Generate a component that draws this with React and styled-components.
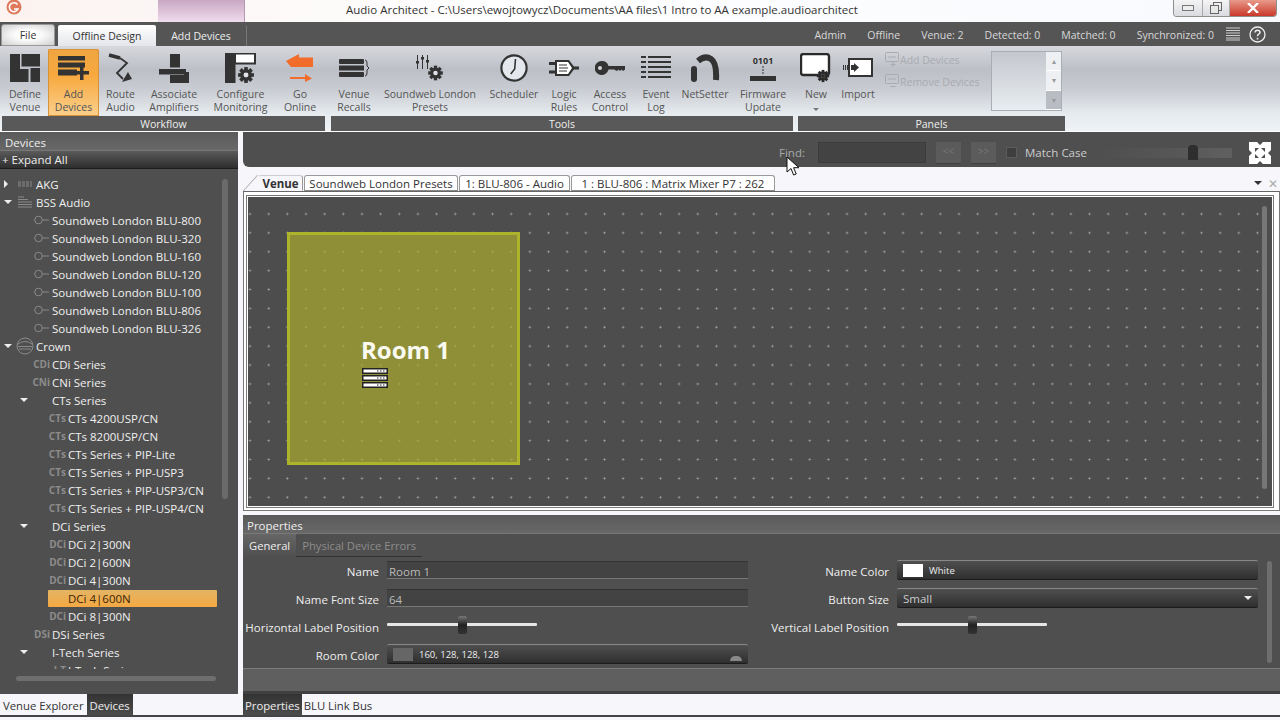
import React from "react";
import styled, { createGlobalStyle } from "styled-components";

const GlobalStyle = createGlobalStyle`
  html, body {
    margin: 0;
    padding: 0;
    background: #f6f6fb;
    font-family: "Open Sans", "Noto Sans", sans-serif;
    font-size: 11.5px;
  }
`;

const Shell = styled.div`
  position: relative;
  width: 1280px;
  height: 720px;
  overflow: hidden;
  background: #f6f6fb;
`;

/* title bar */
const TitleBar = styled.div`
  display: flex;
  align-items: flex-start;
  height: 22px;
  background: linear-gradient(90deg, #fdf3f0 0, #fbf6f5 12%, #fff 40%, #f7f9fd 100%);
`;
const Logo = styled.div`
  width: 158px;
  padding: 0 0 0 6px;
  box-sizing: border-box;
  height: 17px;
`;
const ContextBlock = styled.div`
  width: 87px;
  height: 22px;
  background: linear-gradient(180deg, #c9a7c4, #efdcec);
  border-right: 1px solid #b59ab0;
  box-sizing: border-box;
`;
const TitleText = styled.div`
  margin-left: 101px;
  line-height: 20px;
  font-size: 11.5px;
  color: #333;
  white-space: nowrap;
`;
const WindowButtons = styled.div`
  display: flex;
  margin-left: auto;
  margin-right: 3px;
  height: 17px;
  border: 1px solid #8f8f8f;
  border-top: 0;
  border-radius: 0 0 4px 4px;
  overflow: hidden;
  box-sizing: border-box;
`;
const WindowButton = styled.div`
  display: flex;
  align-items: center;
  justify-content: center;
  width: ${(p) => p.$w}px;
  background: ${(p) => (p.$close ? "linear-gradient(180deg,#e89a8a,#c9382a)" : "linear-gradient(180deg,#f4f4f4,#d9dbe0)")};
  border-right: ${(p) => (p.$close ? "0" : "1px solid #a9a9a9")};
`;

/* ribbon tabs */
const TabRow = styled.div`
  display: flex;
  align-items: stretch;
  height: 24px;
  background: #555;
  padding-left: 1px;
  font-size: 10.5px;
`;
const FileTab = styled.div`
  width: 54px;
  margin-top: 2px;
  margin-right: 3px;
  box-sizing: border-box;
  text-align: center;
  line-height: 20px;
  color: #333;
  border: 1px solid #999;
  border-radius: 3px 3px 0 0;
  background: radial-gradient(ellipse at center, #fff 30%, #cfcfcf 100%);
`;
const RibbonTab = styled.div`
  width: ${(p) => p.$w}px;
  margin-top: 3px;
  text-align: center;
  line-height: 22px;
  color: ${(p) => (p.$active ? "#333" : "#eee")};
  background: ${(p) => (p.$active ? "linear-gradient(180deg,#fff,#e4e6ea)" : "transparent")};
  border-radius: 2px 2px 0 0;
  border-right: ${(p) => (p.$ctx ? "1px solid #777" : "0")};
`;
const StatusRow = styled.div`
  display: flex;
  align-items: center;
  gap: 21px;
  margin-left: auto;
  padding: 1px 14px 0 0;
  box-sizing: border-box;
  color: #d8d8d8;
`;
const StatusIcons = styled.div`
  display: flex;
  align-items: center;
  gap: 9px;
  margin-left: -9px;
  margin-top: -1px;
`;

/* ribbon */
const Ribbon = styled.div`
  display: flex;
  height: 86px;
  padding-left: 2px;
  box-sizing: border-box;
  background: linear-gradient(180deg, #d6d8dd 0, #bcbfc6 28%, #c8cbd1 50%, #e6ebef 80%, #eff3f6 100%);
  border-bottom: 1px solid #fff;
`;
const RibbonGroup = styled.div`
  display: flex;
  flex-direction: column;
  width: ${(p) => p.$w}px;
  margin-right: ${(p) => p.$mr || 0}px;
`;
const GroupButtons = styled.div`
  display: flex;
  height: 70px;
  padding-top: 3px;
  box-sizing: border-box;
`;
const GroupLabel = styled.div`
  height: 15px;
  line-height: 17px;
  text-align: center;
  color: #eee;
  font-size: 10.5px;
  background: #595959;
`;
const RibbonButton = styled.div`
  display: flex;
  flex-direction: column;
  align-items: center;
  width: ${(p) => p.$w}px;
  height: 67px;
  box-sizing: border-box;
  border-radius: 2px 2px 0 0;
  background: ${(p) => (p.$active ? "linear-gradient(180deg,#f0a540 0,#f7a93f 40%,#fbd08d 100%)" : "transparent")};
  box-shadow: ${(p) => (p.$active ? "inset 0 0 0 1px #d89236" : "none")};
`;
const IconSlot = styled.div`
  display: flex;
  align-items: center;
  justify-content: center;
  height: 38px;
  padding-bottom: 1px;
  flex: none;
`;
const ButtonLabel = styled.div`
  font-size: 10.5px;
  line-height: 13px;
  text-align: center;
  color: #555;
  white-space: pre-line;
`;
const SmallCommands = styled.div`
  display: flex;
  flex-direction: column;
  gap: 7px;
  width: 109px;
  padding: 3px 0 0 3px;
  box-sizing: border-box;
`;
const SmallCommand = styled.div`
  display: flex;
  align-items: center;
  height: 15px;
  font-size: 10.5px;
  color: #a9abb0;
  white-space: nowrap;
`;
const Gallery = styled.div`
  display: flex;
  justify-content: flex-end;
  width: 71px;
  height: 60px;
  border: 1px solid #a9adb4;
  box-sizing: border-box;
  margin-top: 2px;
  background: linear-gradient(180deg, #c4c7cd, #e8edf1);
`;
const GalleryScroll = styled.div`
  display: flex;
  flex-direction: column;
  width: 15px;
  background: #eef0f3;
`;
const GalleryStep = styled.div`
  flex: 1;
  display: flex;
  align-items: center;
  justify-content: center;
  font-size: 8px;
  line-height: 1;
  color: #999;
  border-bottom: 1px solid #fff;
  background: ${(p) => (p.$dark ? "#b9bcc2" : "transparent")};
`;

/* main area */
const Main = styled.div`
  display: flex;
  gap: 5px;
  height: 583px;
`;
const Column = styled.div`
  display: flex;
  flex-direction: column;
  width: ${(p) => p.$w}px;
  flex: none;
`;
const LeftPanel = styled.div`
  display: flex;
  flex-direction: column;
  height: 562px;
  background: #4f4f4f;
`;
const PanelTitle = styled.div`
  height: 19px;
  line-height: 21px;
  padding-left: ${(p) => p.$pl}px;
  color: #eee;
  font-size: 11.5px;
  background: linear-gradient(180deg, #5a5a5a, #686868);
  border-bottom: 1px solid #777;
  box-sizing: border-box;
`;
const ExpandAll = styled.div`
  height: 18px;
  line-height: 18px;
  padding-left: 2px;
  color: #eee;
  background: linear-gradient(180deg, #5a5a5a, #2e2e2e);
  border-bottom: 1px solid #1e1e1e;
  box-sizing: border-box;
`;
const TreeArea = styled.div`
  display: flex;
  height: 500px;
  overflow: hidden;
`;
const TreeList = styled.div`
  width: 217px;
  padding-top: 6px;
  flex: none;
`;
const TreeRow = styled.div`
  display: flex;
  align-items: center;
  height: 18px;
  padding-left: ${(p) => 4 + p.$level * 16}px;
  box-sizing: border-box;
`;
const Expander = styled.div`
  width: 12px;
  flex: none;
  display: flex;
  align-items: center;
`;
const Arrow = styled.div`
  width: 0;
  height: 0;
  ${(p) =>
    p.$open
      ? "border-left: 4px solid transparent; border-right: 4px solid transparent; border-top: 4px solid #eee;"
      : "border-top: 4px solid transparent; border-bottom: 4px solid transparent; border-left: 4px solid #eee;"}
`;
const TreeContent = styled.div`
  flex: 1;
  display: flex;
  align-items: center;
  gap: 2px;
  height: 17px;
  color: ${(p) => (p.$selected ? "#3c2405" : "#f0f0f0")};
  font-size: 11.5px;
  white-space: nowrap;
  border-radius: 1px;
  background: ${(p) => (p.$selected ? "linear-gradient(180deg,#e3b465,#f4a942)" : "transparent")};
`;
const TreeIcon = styled.div`
  width: 18px;
  flex: none;
  display: flex;
  align-items: center;
  justify-content: flex-end;
  color: #8c8c8c;
  font-size: 10px;
  font-weight: 700;
`;
const TreeScroll = styled.div`
  width: 6px;
  height: 320px;
  margin: 10px 0 0 5px;
  border-radius: 3px;
  background: #6a6a6a;
`;
const HScrollTrack = styled.div`
  padding: 7px 22px 13px 16px;
`;
const HScrollThumb = styled.div`
  height: 5px;
  border-radius: 3px;
  background: #6e6e6e;
`;
const BottomTabs = styled.div`
  display: flex;
  height: 21px;
`;
const BottomTab = styled.div`
  padding: 0 ${(p) => p.$px}px;
  line-height: 23px;
  font-size: 11.3px;
  color: ${(p) => (p.$active ? "#eee" : "#333")};
  background: ${(p) => (p.$active ? "linear-gradient(180deg,#333,#4c4c4c)" : "transparent")};
`;

/* find toolbar */
const FindBar = styled.div`
  display: flex;
  align-items: center;
  height: 35px;
  padding: 6px 0 0 536px;
  box-sizing: border-box;
  background: #4f4f4f;
  border-radius: 0 0 0 6px;
  color: #999;
`;
const FindLabel = styled.div`
  width: 39px;
  color: #aaa;
`;
const FindInput = styled.div`
  width: 108px;
  height: 21px;
  background: #434343;
  border: 1px solid #3c3c3c;
  box-sizing: border-box;
  margin-right: 10px;
`;
const FindStep = styled.div`
  width: 25px;
  height: 22px;
  margin-right: 10px;
  text-align: center;
  line-height: 18px;
  font-size: 10px;
  color: #777;
  background: #5b5b5b;
  border-bottom: 1px solid #3f3f3f;
  box-sizing: border-box;
`;
const CheckBox = styled.div`
  width: 11px;
  height: 11px;
  background: #3e3e3e;
  border: 1px solid #5c5c5c;
  margin-right: 8px;
  box-sizing: border-box;
`;
const MatchCase = styled.div`
  width: 75px;
  color: #ccc;
`;
const ZoomSlider = styled.div`
  position: relative;
  width: 132px;
  height: 10px;
  margin-right: 17px;
  background: linear-gradient(94deg, transparent 0, #575757 60%, #606060 100%);
`;
const ZoomThumb = styled.div`
  position: absolute;
  left: 88px;
  top: -3px;
  width: 10px;
  height: 15px;
  border-radius: 4px 4px 0 0;
  background: #2e2e2e;
`;

/* document tabs */
const DocTabs = styled.div`
  display: flex;
  align-items: flex-end;
  height: 24px;
  padding-left: 15px;
  box-sizing: border-box;
`;
const DocTab = styled.div`
  position: relative;
  width: ${(p) => p.$w}px;
  height: 16px;
  line-height: 15px;
  margin-right: 1px;
  text-align: center;
  font-size: 11.5px;
  font-weight: ${(p) => (p.$active ? 700 : 400)};
  color: #333;
  background: ${(p) => (p.$active ? "transparent" : "#fff")};
  border: 1px solid #999;
  border-color: ${(p) => (p.$active ? "#ccc #999 transparent transparent" : "#999 #999 #888 #999")};
  border-radius: 3px 3px 0 0;
  box-sizing: border-box;
  white-space: nowrap;
  &::before {
    content: "";
    display: ${(p) => (p.$active ? "block" : "none")};
    position: absolute;
    left: -9px;
    top: -1px;
    width: 14px;
    height: 16px;
    border-left: 1px solid #aaa;
    transform: skewX(-42deg);
  }
`;
const DocTools = styled.div`
  display: flex;
  align-items: center;
  gap: 6px;
  height: 16px;
  margin-left: auto;
  padding-right: 2px;
  color: #aaa;
`;
const DocMenuArrow = styled.div`
  width: 0;
  height: 0;
  border-left: 4px solid transparent;
  border-right: 4px solid transparent;
  border-top: 4px solid #333;
`;
const CanvasFrame = styled.div`
  height: 320px;
  padding: 3px 5px 2px 2px;
  margin-bottom: 4px;
  box-sizing: border-box;
  background: #fff;
  border: 1px solid #777;
  border-top: 1px solid #666;
`;
const CanvasInset = styled.div`
  height: 100%;
  padding: 1px;
  box-sizing: border-box;
  border: 1px solid #777;
`;
const Canvas = styled.div`
  position: relative;
  height: 100%;
  background-color: #4d4d4d;
  background-image: radial-gradient(circle, #a8a8a8 0.8px, transparent 1.2px);
  background-size: 18.67px 18.9px;
  background-position: -7.3px -11.4px;
  overflow: hidden;
`;
const Room = styled.div`
  position: absolute;
  left: 39px;
  top: 35px;
  width: 233px;
  height: 233px;
  box-sizing: border-box;
  background: rgba(171, 171, 47, 0.7);
  border: 3px solid #aeb32c;
`;
const RoomName = styled.div`
  position: absolute;
  left: 113px;
  top: 137px;
  color: #fafaf0;
  font-size: 24px;
  font-weight: 700;
  line-height: 32px;
  white-space: nowrap;
`;
const RoomRack = styled.div`
  position: absolute;
  left: 114px;
  top: 171px;
  line-height: 0;
`;
const CanvasScroll = styled.div`
  position: absolute;
  right: 5px;
  top: 9px;
  width: 5px;
  height: 283px;
  border-radius: 3px;
  background: #777;
`;

/* properties */
const Properties = styled.div`
  display: flex;
  flex-direction: column;
  height: 179px;
  background: #4f4f4f;
`;
const PropTabs = styled.div`
  display: flex;
  height: 23px;
`;
const PropTab = styled.div`
  padding: 0 ${(p) => p.$px}px;
  line-height: 23px;
  font-size: 11.2px;
  color: ${(p) => (p.$active ? "#eee" : "#8d8d8d")};
  background: ${(p) => (p.$active ? "linear-gradient(180deg,#666,#4f4f4f)" : "transparent")};
  border-bottom: ${(p) => (p.$active ? "0" : "1px solid #333")};
`;
const PropBody = styled.div`
  position: relative;
  flex: 1;
  padding-top: 3px;
  box-sizing: border-box;
`;
const PropGrid = styled.div`
  display: grid;
  grid-template-columns: 136px 361px 133px 361px;
  grid-auto-rows: 20px;
  column-gap: 8px;
  row-gap: 8px;
`;
const PropLabel = styled.div`
  text-align: right;
  line-height: 23px;
  color: #eee;
  white-space: nowrap;
`;
const TextField = styled.div`
  height: 18px;
  margin-top: 1px;
  padding-left: 2px;
  line-height: 19px;
  color: #bbb;
  background: #434343;
  border-top: 1px solid #333;
  border-bottom: 1px solid #777;
  box-sizing: border-box;
`;
const PickerField = styled.div`
  display: flex;
  align-items: center;
  height: 20px;
  padding: 0 6px;
  gap: 6px;
  box-sizing: border-box;
  color: #eee;
  font-size: 9.5px;
  border-top: 1px solid #888;
  border-bottom: 1px solid #1c1c1c;
  border-radius: 2px;
  background: linear-gradient(180deg, #4f4f4f, #2f2f2f);
`;
const Swatch = styled.div`
  width: 20px;
  height: 13px;
  background: ${(p) => p.$color};
`;
const SelectValue = styled.div`
  flex: 1;
  font-size: 11.5px;
  color: #ccc;
`;
const SelectArrow = styled.div`
  width: 0;
  height: 0;
  border-left: 4px solid transparent;
  border-right: 4px solid transparent;
  border-top: 4px solid #eee;
`;
const PickerCorner = styled.div`
  width: 12px;
  height: 5px;
  margin-left: auto;
  margin-top: 9px;
  border-radius: 6px 6px 0 0;
  background: #888;
`;
const Slider = styled.div`
  position: relative;
  width: 150px;
  height: 20px;
`;
const SliderRail = styled.div`
  position: absolute;
  left: 0;
  right: 0;
  top: 7px;
  height: 3px;
  background: #e6e6e6;
  border-radius: 1px;
`;
const SliderThumb = styled.div`
  position: absolute;
  left: 71px;
  top: 0;
  width: 9px;
  height: 18px;
  border-radius: 2px;
  background: linear-gradient(180deg, #777, #222 50%, #333);
`;
const PropScroll = styled.div`
  position: absolute;
  right: 8px;
  top: 4px;
  width: 5px;
  height: 102px;
  border-radius: 3px;
  background: #6e6e6e;
`;
const PropFooter = styled.div`
  height: 26px;
  box-sizing: border-box;
  background: #5f5f5f;
  border-top: 1px solid #7c7c7c;
  border-bottom: 3px solid #404040;
`;
const BottomEdge = styled.div`
  height: 2px;
  background: #444;
`;
const Pointer = styled.div`
  position: absolute;
  left: 786px;
  top: 156px;
  line-height: 0;
`;

const ink = "#333";

const GearPath = ({ cx, cy, r, fill = ink }) => {
  const teeth = [0, 45, 90, 135].map((a) => (
    <rect key={a} x={cx - r * 0.28} y={cy - r * 1.22} width={r * 0.56} height={r * 2.44} fill={fill} transform={`rotate(${a} ${cx} ${cy})`} />
  ));
  return (
    <g>
      {teeth}
      <circle cx={cx} cy={cy} r={r * 0.9} fill={fill} />
      <circle cx={cx} cy={cy} r={r * 0.38} fill="#dfe3e7" />
    </g>
  );
};

const DefineVenueIcon = () => (
  <svg width="30" height="28" viewBox="0 0 30 28" fill={ink}>
    <path d="M0 0h10v15h8.5v13H0z" />
    <rect x="11.5" width="18.5" height="12.5" />
    <rect x="20.5" y="14" width="9.5" height="14" />
  </svg>
);
const AddDevicesIcon = () => (
  <svg width="31" height="24" viewBox="0 0 31 24" fill={ink}>
    <rect width="27" height="4.5" />
    <rect y="6.5" width="27" height="5" />
    <rect y="13.5" width="19" height="6" />
    <path d="M22 9h3.5v6H31v3.5h-5.5V24H22v-5.5h-3V15h3z" />
  </svg>
);
const RouteAudioIcon = () => (
  <svg width="26" height="30" viewBox="0 0 26 30" fill="none" stroke={ink}>
    <path d="M1 2l11 3" strokeWidth="3.5" />
    <path d="M12 5l7 5-10 10 6 6" strokeWidth="1.8" />
    <path d="M14 29l10-3-4-7z" fill={ink} stroke="none" />
  </svg>
);
const AssociateIcon = () => (
  <svg width="31" height="29" viewBox="0 0 31 29" fill={ink}>
    <rect x="11" width="10" height="13.5" />
    <path d="M0 15h27v3h3v11H11v-8h14v-2H0z" />
    <rect x="0" y="15" width="25" height="5.5" />
  </svg>
);
const ConfigureIcon = () => (
  <svg width="31" height="30" viewBox="0 0 31 30">
    <rect y="0" width="10.5" height="30" fill={ink} />
    <rect x="10" y="0.5" width="20" height="10" fill="#fff" stroke={ink} strokeWidth="2" />
    <GearPath cx="21" cy="22" r="6.5" />
  </svg>
);
const GoOnlineIcon = () => (
  <svg width="28" height="28" viewBox="0 0 28 28" fill="#f26c2b">
    <path d="M0 7L13 0v3.5h14V13H5z" />
    <path d="M4 23h15v-3l7 4.5-7 3.500v-3H4z" />
  </svg>
);
const RecallsIcon = () => (
  <svg width="30" height="18" viewBox="0 0 30 18" fill={ink}>
    <rect width="25" height="5" rx="1" />
    <rect y="6.5" width="25" height="5" />
    <rect y="13" width="25" height="5" rx="1" />
    <path d="M26 1q2 0 2 3v3l2 2-2 2v3q0 3-2 3" fill="none" stroke={ink} strokeWidth="1" />
  </svg>
);
const PresetsIcon = () => (
  <svg width="28" height="28" viewBox="0 0 28 28">
    <g stroke={ink} strokeWidth="1">
      <path d="M1.5 1v14M6.5 1v14M11.5 1v14" />
    </g>
    <g fill={ink}>
      <rect x="0" y="7" width="3" height="2.5" />
      <rect x="5" y="3" width="3" height="2.5" />
      <rect x="10" y="6" width="3" height="2.5" />
    </g>
    <GearPath cx="19.5" cy="19" r="6" />
  </svg>
);
const ClockIcon = () => (
  <svg width="28" height="28" viewBox="0 0 28 28" fill="none" stroke={ink}>
    <circle cx="14" cy="14" r="12.6" strokeWidth="2.2" fill="#e4e7eb" />
    <path d="M15.5 5l-.8 10-4 5" strokeWidth="1.6" />
  </svg>
);
const LogicIcon = () => (
  <svg width="30" height="18" viewBox="0 0 30 18">
    <path d="M0 4.5h6M0 13h6M24 9h6" stroke={ink} strokeWidth="3" />
    <path d="M6 1h14l6 8-6 8H6z" fill={ink} />
    <path d="M8 3h11l4 6-4 6H8z" fill="#fff" />
    <path d="M10 6h8M10 9h9M10 12h8" stroke={ink} strokeWidth="1" />
  </svg>
);
const KeyIcon = () => (
  <svg width="30" height="14" viewBox="0 0 30 14" fill={ink}>
    <path d="M7 0a7 7 0 0 1 6.5 5H30v3.5l-2 1.5-1.5-1.5-1.5 1.5-1.5-1.5-1.5 1.5L19 8.5H13.500A7 7 0 1 1 7 0z" />
    <circle cx="5" cy="7" r="2" fill="#d3d6da" />
  </svg>
);
const EventLogIcon = () => (
  <svg width="30" height="24" viewBox="0 0 30 24" fill={ink}>
    {[0, 5, 10, 15, 20].map((y) => (
      <g key={y}>
        <rect y={y} width="5" height="2" />
        <rect x="7" y={y} width="23" height="2" />
      </g>
    ))}
  </svg>
);
const NetSetterIcon = () => (
  <svg width="30" height="28" viewBox="0 0 30 28" fill="none" stroke={ink} strokeLinecap="round">
    <path d="M8 7Q15 1 21 5q6 4 5 21" strokeWidth="6" strokeLinecap="butt" />
    <path d="M4 15v10" strokeWidth="6" />
  </svg>
);
const FirmwareIcon = () => (
  <svg width="28" height="27" viewBox="0 0 28 27">
    <text x="14" y="9" textAnchor="middle" fontSize="9" fontWeight="700" fontFamily="Open Sans, sans-serif" fill={ink}>0101</text>
    <path d="M14 11v8" stroke={ink} strokeWidth="1" strokeDasharray="2 1" />
    <rect x="1" y="21" width="26" height="5" fill={ink} />
  </svg>
);
const NewPanelIcon = () => (
  <svg width="32" height="30" viewBox="0 0 32 30">
    <rect x="1" y="1" width="28" height="21" rx="2.5" fill="#fff" stroke="#2a2a2a" strokeWidth="2.4" />
    <GearPath cx="23" cy="23" r="5" fill="#2a2a2a" />
    <circle cx="23" cy="23" r="2" fill="#2a2a2a" />
  </svg>
);
const ImportIcon = () => (
  <svg width="30" height="20" viewBox="0 0 30 20" fill={ink}>
    <rect x="6" y="1" width="23" height="17" fill="#fff" stroke={ink} strokeWidth="2" />
    <path d="M0 7h1v5H0zM2 7h1v5H2zM4 7h1v5H4zM6 7h1v5H6zM8 7h3V5l5 4.5-5 4.500v-2H8z" />
  </svg>
);
const DisabledPanelIcon = ({ plus }) => (
  <svg width="15" height="15" viewBox="0 0 15 15" fill="none" stroke="#a9abb0">
    <rect x="0.5" y="0.5" width="13" height="9" rx="1" />
    <path d="M3 5h8" />
    <path d={plus ? "M8 10v5M5.500 12.500h5" : "M5.500 12.500h5"} />
  </svg>
);
const ListIcon = () => (
  <svg width="14" height="14" viewBox="0 0 14 14" stroke="#ddd">
    {[1, 3.5, 6, 8.5, 11, 13].map((y) => (
      <path key={y} d={`M0 ${y}h14`} strokeWidth="0.9" />
    ))}
  </svg>
);
const HelpIcon = () => (
  <svg width="17" height="17" viewBox="0 0 17 17" fill="none" stroke="#eee">
    <circle cx="8.5" cy="8.5" r="7.5" strokeWidth="1.3" />
    <path d="M6 6.500q.3-2.300 2.500-2.300t2.500 2q0 1.300-1.300 2t-1.200 2" strokeWidth="1.5" />
    <circle cx="8.5" cy="12.7" r="0.9" fill="#eee" stroke="none" />
  </svg>
);
const LogoIcon = () => (
  <svg width="16" height="16" viewBox="0 0 16 16">
    <circle cx="8" cy="7" r="7.5" fill="#df7a5c" />
    <path d="M11.500 4.500A4.500 4.500 0 1 0 12 9H8" fill="none" stroke="#fff" strokeWidth="1.6" />
  </svg>
);
const FitIcon = () => (
  <svg width="22" height="22" viewBox="0 0 22 22">
    <rect width="22" height="22" fill="#fff" />
    <path d="M8 0l3 3 3-3zM8 22l3-3 3 3zM0 8l3 3-3 3zM22 8l-3 3 3 3z" fill="#4f4f4f" />
    <path d="M6 6l4 0-4 4zM16 6l-4 0 4 4zM6 16l4 0-4-4zM16 16l-4 0 4-4z" fill="#4f4f4f" />
  </svg>
);
const RackIcon = () => (
  <svg width="26" height="20" viewBox="0 0 26 20">
    {[0, 7, 14].map((y) => (
      <g key={y}>
        <rect x="0.5" y={y + 0.5} width="25" height="5" fill="#222" stroke="#222" />
        <rect x="1.5" y={y + 1.5} width="23" height="3" fill="#fff" />
        <rect x="3" y={y + 2} width="8" height="2" fill="#fff" />
        <path d={`M15 ${y + 3}h9`} stroke="#222" strokeDasharray="1.5 1.5" />
      </g>
    ))}
  </svg>
);
const PointerIcon = () => (
  <svg width="14" height="21" viewBox="0 0 14 21">
    <path d="M1 1v15l4-3.500 2.600 6.500 2.600-1-2.600-6.300H13z" fill="#fff" stroke="#111" strokeWidth="1" />
  </svg>
);
const SoundwebIcon = () => (
  <svg width="16" height="10" viewBox="0 0 16 10" fill="none" stroke="#8a8a8a">
    <circle cx="4.5" cy="5" r="3.8" />
    <path d="M8.500 5H15" />
  </svg>
);
const LinesIcon = ({ small }) => (
  <svg width="18" height="12" viewBox="0 0 18 12" stroke="#8a8a8a">
    {small ? (
      <path d="M2 4h14M2 6h14M2 8h14" strokeDasharray="3 1" />
    ) : (
      <path d="M2 1h6M2 3.500h10M2 6h14M2 8.500h14M2 11h14" />
    )}
  </svg>
);
const CrownIcon = () => (
  <svg width="18" height="18" viewBox="0 0 18 18" fill="none" stroke="#8a8a8a">
    <circle cx="9" cy="9" r="8" />
    <path d="M2 7q7-5 14 0M2 9.500h14M3 12h12" />
  </svg>
);

const workflow = [
  { w: 46, label: "Define\nVenue", icon: <DefineVenueIcon /> },
  { w: 51, label: "Add\nDevices", icon: <AddDevicesIcon />, active: true },
  { w: 43, label: "Route\nAudio", icon: <RouteAudioIcon /> },
  { w: 64, label: "Associate\nAmplifiers", icon: <AssociateIcon /> },
  { w: 69, label: "Configure\nMonitoring", icon: <ConfigureIcon /> },
  { w: 50, label: "Go\nOnline", icon: <GoOnlineIcon /> },
];
const tools = [
  { w: 46, label: "Venue\nRecalls", icon: <RecallsIcon /> },
  { w: 106, label: "Soundweb London\nPresets", icon: <PresetsIcon /> },
  { w: 62, label: "Scheduler", icon: <ClockIcon /> },
  { w: 38, label: "Logic\nRules", icon: <LogicIcon /> },
  { w: 54, label: "Access\nControl", icon: <KeyIcon /> },
  { w: 38, label: "Event\nLog", icon: <EventLogIcon /> },
  { w: 60, label: "NetSetter", icon: <NetSetterIcon /> },
  { w: 56, label: "Firmware\nUpdate", icon: <FirmwareIcon /> },
];

const blu = ["800", "320", "160", "120", "100", "806", "326"];
const tree = [
  { level: 0, arrow: "closed", icon: <LinesIcon small />, text: "AKG" },
  { level: 0, arrow: "open", icon: <LinesIcon />, text: "BSS Audio" },
  ...blu.map((n) => ({ level: 1, icon: <SoundwebIcon />, text: `Soundweb London BLU-${n}` })),
  { level: 0, arrow: "open", icon: <CrownIcon />, text: "Crown" },
  { level: 1, badge: "CDi", text: "CDi Series" },
  { level: 1, badge: "CNi", text: "CNi Series" },
  { level: 1, arrow: "open", text: "CTs Series" },
  { level: 2, badge: "CTs", text: "CTs 4200USP/CN" },
  { level: 2, badge: "CTs", text: "CTs 8200USP/CN" },
  { level: 2, badge: "CTs", text: "CTs Series + PIP-Lite" },
  { level: 2, badge: "CTs", text: "CTs Series + PIP-USP3" },
  { level: 2, badge: "CTs", text: "CTs Series + PIP-USP3/CN" },
  { level: 2, badge: "CTs", text: "CTs Series + PIP-USP4/CN" },
  { level: 1, arrow: "open", text: "DCi Series" },
  { level: 2, badge: "DCi", text: "DCi 2|300N" },
  { level: 2, badge: "DCi", text: "DCi 2|600N" },
  { level: 2, badge: "DCi", text: "DCi 4|300N" },
  { level: 2, badge: "DCi", text: "DCi 4|600N", selected: true },
  { level: 2, badge: "DCi", text: "DCi 8|300N" },
  { level: 1, badge: "DSi", text: "DSi Series" },
  { level: 1, arrow: "open", text: "I-Tech Series" },
  { level: 2, badge: "I-T", text: "I-Tech Series" },
];

const RibbonButtons = ({ items }) =>
  items.map((b) => (
    <RibbonButton key={b.label} $w={b.w} $active={b.active}>
      <IconSlot>{b.icon}</IconSlot>
      <ButtonLabel>{b.label}</ButtonLabel>
    </RibbonButton>
  ));

export default function App() {
  return (
    <Shell>
      <GlobalStyle />
      <TitleBar>
        <Logo>
          <LogoIcon />
        </Logo>
        <ContextBlock />
        <TitleText>Audio Architect - C:\Users\ewojtowycz\Documents\AA files\1 Intro to AA example.audioarchitect</TitleText>
        <WindowButtons>
          <WindowButton $w={28}>
            <svg width="12" height="6"><rect x="0.5" y="0.5" width="11" height="5" fill="#eee" stroke="#777" /></svg>
          </WindowButton>
          <WindowButton $w={26}>
            <svg width="12" height="12" fill="none" stroke="#666"><rect x="3.5" y="0.5" width="8" height="8" /><rect x="0.5" y="3.5" width="8" height="8" fill="#e8e8e8" /></svg>
          </WindowButton>
          <WindowButton $w={46} $close>
            <svg width="12" height="10" stroke="#fff" strokeWidth="2.4"><path d="M1 0l10 10M11 0L1 10" /></svg>
          </WindowButton>
        </WindowButtons>
      </TitleBar>

      <TabRow>
        <FileTab>File</FileTab>
        <RibbonTab $w={98} $active>Offline Design</RibbonTab>
        <RibbonTab $w={90} $ctx>Add Devices</RibbonTab>
        <StatusRow>
          <span>Admin</span>
          <span>Offline</span>
          <span>Venue: 2</span>
          <span>Detected: 0</span>
          <span>Matched: 0</span>
          <span>Synchronized: 0</span>
          <StatusIcons>
            <ListIcon />
            <HelpIcon />
          </StatusIcons>
        </StatusRow>
      </TabRow>

      <Ribbon>
        <RibbonGroup $w={323} $mr={6}>
          <GroupButtons>
            <RibbonButtons items={workflow} />
          </GroupButtons>
          <GroupLabel>Workflow</GroupLabel>
        </RibbonGroup>
        <RibbonGroup $w={462} $mr={5}>
          <GroupButtons>
            <RibbonButtons items={tools} />
          </GroupButtons>
          <GroupLabel>Tools</GroupLabel>
        </RibbonGroup>
        <RibbonGroup $w={267}>
          <GroupButtons>
            <RibbonButton $w={36}>
              <IconSlot><NewPanelIcon /></IconSlot>
              <ButtonLabel>New</ButtonLabel>
              <svg width="6" height="12"><path d="M0 7h6l-3 3z" fill="#777" /></svg>
            </RibbonButton>
            <RibbonButton $w={48}>
              <IconSlot><ImportIcon /></IconSlot>
              <ButtonLabel>Import</ButtonLabel>
            </RibbonButton>
            <SmallCommands>
              <SmallCommand><DisabledPanelIcon plus />Add Devices</SmallCommand>
              <SmallCommand><DisabledPanelIcon />Remove Devices</SmallCommand>
            </SmallCommands>
            <Gallery>
              <GalleryScroll>
                <GalleryStep>▴</GalleryStep>
                <GalleryStep>▾</GalleryStep>
                <GalleryStep $dark>▾</GalleryStep>
              </GalleryScroll>
            </Gallery>
          </GroupButtons>
          <GroupLabel>Panels</GroupLabel>
        </RibbonGroup>
      </Ribbon>

      <Main>
        <Column $w={238}>
          <LeftPanel>
            <PanelTitle $pl={5}>Devices</PanelTitle>
            <ExpandAll>+ Expand All</ExpandAll>
            <TreeArea>
              <TreeList>
                {tree.map((row, i) => (
                  <TreeRow key={i} $level={row.level}>
                    <Expander>{row.arrow && <Arrow $open={row.arrow === "open"} />}</Expander>
                    <TreeContent $selected={row.selected}>
                      <TreeIcon>{row.selected ? null : row.icon || row.badge}</TreeIcon>
                      {row.text}
                    </TreeContent>
                  </TreeRow>
                ))}
              </TreeList>
              <TreeScroll />
            </TreeArea>
            <HScrollTrack>
              <HScrollThumb />
            </HScrollTrack>
          </LeftPanel>
          <BottomTabs>
            <BottomTab $px={3}>Venue Explorer</BottomTab>
            <BottomTab $px={3} $active>Devices</BottomTab>
          </BottomTabs>
        </Column>

        <Column $w={1037}>
          <FindBar>
            <FindLabel>Find:</FindLabel>
            <FindInput />
            <FindStep>&lt;&lt;</FindStep>
            <FindStep>&gt;&gt;</FindStep>
            <CheckBox />
            <MatchCase>Match Case</MatchCase>
            <ZoomSlider><ZoomThumb /></ZoomSlider>
            <FitIcon />
          </FindBar>
          <DocTabs>
            <DocTab $w={45} $active>Venue</DocTab>
            <DocTab $w={154}>Soundweb London Presets</DocTab>
            <DocTab $w={111}>1: BLU-806 - Audio</DocTab>
            <DocTab $w={204}>1 : BLU-806 : Matrix Mixer P7 : 262</DocTab>
            <DocTools>
              <DocMenuArrow />
              ✕
            </DocTools>
          </DocTabs>
          <CanvasFrame>
            <CanvasInset>
              <Canvas>
                <Room />
                <RoomName>Room 1</RoomName>
                <RoomRack><RackIcon /></RoomRack>
                <CanvasScroll />
              </Canvas>
            </CanvasInset>
          </CanvasFrame>
          <Properties>
            <PanelTitle $pl={4}>Properties</PanelTitle>
            <PropTabs>
              <PropTab $px={6} $active>General</PropTab>
              <PropTab $px={6}>Physical Device Errors</PropTab>
            </PropTabs>
            <PropBody>
              <PropGrid>
                <PropLabel>Name</PropLabel>
                <TextField>Room 1</TextField>
                <PropLabel>Name Color</PropLabel>
                <PickerField><Swatch $color="#fff" />White</PickerField>

                <PropLabel>Name Font Size</PropLabel>
                <TextField>64</TextField>
                <PropLabel>Button Size</PropLabel>
                <PickerField><SelectValue>Small</SelectValue><SelectArrow /></PickerField>

                <PropLabel>Horizontal Label Position</PropLabel>
                <Slider><SliderRail /><SliderThumb /></Slider>
                <PropLabel>Vertical Label Position</PropLabel>
                <Slider><SliderRail /><SliderThumb /></Slider>

                <PropLabel>Room Color</PropLabel>
                <PickerField><Swatch $color="#666" />160, 128, 128, 128<PickerCorner /></PickerField>
              </PropGrid>
              <PropScroll />
            </PropBody>
            <PropFooter />
          </Properties>
          <BottomTabs>
            <BottomTab $px={2} $active>Properties</BottomTab>
            <BottomTab $px={2}>BLU Link Bus</BottomTab>
          </BottomTabs>
        </Column>
      </Main>
      <BottomEdge />

      <Pointer><PointerIcon /></Pointer>
    </Shell>
  );
}
